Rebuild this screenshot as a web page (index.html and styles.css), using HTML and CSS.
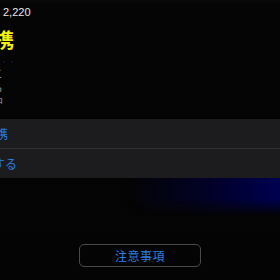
FILE: index.html
```html
<!DOCTYPE html>
<html lang="ja">
<head>
<meta charset="utf-8">
<link rel="stylesheet" href="styles.css">
</head>
<body>
<div class="screen">
  <div class="top">2,220</div>
  <div class="title">提携</div>
  <div class="info">
    <div class="dots">・・</div>
    <div class="line">ここ</div>
    <div class="line">から</div>
    <div class="line">使用中</div>
  </div>
  <div class="list">
    <div class="row row-a">提携</div>
    <div class="row row-b">解除する</div>
  </div>
  <div class="glow"></div>
  <div class="footer">
    <div class="btn">注意事項</div>
  </div>
</div>
</body>
</html>
```
FILE: styles.css
```css
html, body {
  margin: 0;
  padding: 0;
  background: #040404;
}
.screen {
  width: 280px;
  height: 280px;
  overflow: hidden;
  font-family: "Noto Sans CJK JP", "Noto Sans", sans-serif;
  background: linear-gradient(#0b0b0c 0, #050505 4px, #040404 100%);
}
.top {
  height: 22px;
  padding-left: 3px;
  font-family: "Liberation Sans", "Noto Sans", sans-serif;
  font-size: 11px;
  line-height: 24px;
  color: #e8e8e8;
}
.title {
  margin-top: 5px;
  margin-left: -26px;
  height: 26px;
  font-size: 20px;
  font-weight: 700;
  line-height: 26px;
  color: #f2f20a;
  white-space: nowrap;
}
.info {
  margin-top: 6px;
  height: 60px;
  font-size: 11px;
  color: #8e8e8e;
  white-space: nowrap;
}
.dots {
  height: 7px;
  line-height: 6px;
  font-size: 8px;
  color: #1a1a60;
}
.line {
  height: 14px;
  line-height: 14px;
  margin-left: -19px;
}
.line:last-child {
  margin-left: -30px;
}
.list {
  background: #1c1c1f;
  white-space: nowrap;
}
.row {
  height: 29px;
  line-height: 29px;
  font-size: 12px;
  color: #2a7fe0;
  border-bottom: 1px solid #303034;
}
.row-a {
  margin-left: -16px;
}
.row-b {
  margin-left: -31px;
  border-bottom: none;
}
.glow {
  height: 38px;
  background: linear-gradient(to right, rgba(0,0,0,0) 45%, rgba(0,0,70,0.55) 75%, #000052 100%);
  -webkit-mask-image: linear-gradient(#000 55%, transparent);
  mask-image: linear-gradient(#000 55%, transparent);
}
.footer {
  display: flex;
  justify-content: center;
  padding-top: 28px;
}
.btn {
  width: 120px;
  height: 21px;
  border: 1px solid #4a4a4e;
  border-radius: 5px;
  font-size: 12px;
  line-height: 21px;
  text-align: center;
  color: #2a7fe0;
  letter-spacing: 0.5px;
}
```
